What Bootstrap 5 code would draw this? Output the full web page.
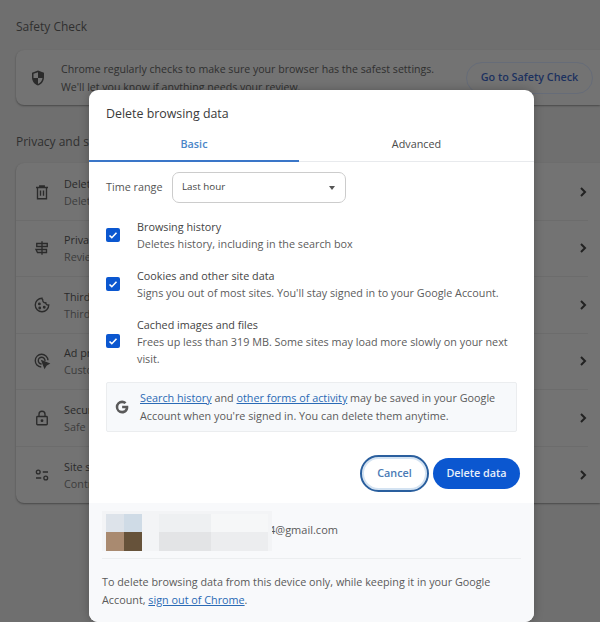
<!DOCTYPE html>
<html lang="en">
<head>
<meta charset="utf-8">
<title>Delete browsing data</title>
<link href="https://cdn.jsdelivr.net/npm/bootstrap@5.3.0/dist/css/bootstrap.min.css" rel="stylesheet">
<style>
html,body{height:622px;overflow:hidden}
body{background:#6f6f6f;font-family:"Open Sans","Noto Sans",sans-serif;font-size:10.8px;color:#3c3c3c;position:relative}
.bgpage{padding:19px 0 0 16px;color:#333}
.sec-title{font-size:12px;line-height:16px;color:#2f2f2f}
.bg-card{background:#737373;border-radius:8px 0 0 8px;box-shadow:0 1px 2px rgba(0,0,0,.35)}
.safety{height:55px;margin-top:15px;margin-bottom:29px;padding-left:13px;padding-right:7px}
.safety p{line-height:18px;color:#2f2f2f;font-size:10.6px;margin-left:14px}
.go-btn{border:1px solid #666c78;border-radius:16px;height:32px;width:127px;color:#1c315f;font-weight:600;font-size:10.8px}
.rows{margin-top:13px;height:340px;padding-right:12px;padding-top:1px}
.bg-row{height:56.5px;padding-left:17px;border-bottom:1px solid #6c6c6c;line-height:17px;color:#2a2a2a}
.bg-row:last-child{border-bottom:0}
.bg-row .txt{margin-left:13px}
.bg-row .sub{color:#3c3c3c}
.bg-ico{width:18px;height:18px;flex:none}
.dlg{position:absolute;left:89px;top:90px;width:445px;height:532px;background:#fff;border-radius:9px;overflow:hidden;box-shadow:0 0 10px rgba(0,0,0,.25)}
.dlg-head{padding:14px 17px 0;font-size:12.4px;line-height:19px;height:42px;color:#3a3a3a}
.tabbar{height:30px;border-bottom:1px solid #e8eaed;flex:none}
.tabitem{line-height:24px;text-align:center;color:#4a4a4a;font-size:10.8px}
.tabitem.on{width:210px;color:#4a86c8;font-weight:600;border-bottom:2px solid #3a76c8;height:30px}
.tabitem.off{flex:1;font-weight:500}
.range{padding:10px 17px 0;height:51px;flex:none}
.range-lbl{width:66px;font-size:10.8px;color:#555;line-height:30px}
.fake-select{width:174px;height:31px;border:1px solid #ccc;border-radius:7px;padding:0 10px 0 9px;font-size:9.8px;color:#444}
.caret{width:0;height:0;border-left:3px solid transparent;border-right:3px solid transparent;border-top:4px solid #555}
.opts{padding:0 17px;flex:none}
.opt{line-height:17px}
.opt .ck{width:14px;height:14px;background:#0b57d0;border-radius:2px;flex:none;margin-right:17px}
.opt .name{color:#444}
.opt .desc{color:#5c5c5c}
.opt1,.opt2{height:49px;padding-bottom:6px}
.opt3{height:71px;padding-bottom:11px}
.info{margin:0 17px;height:50px;flex:none;background:#f7f9fb;border:1px solid #ebedef;border-radius:2px;line-height:18px;color:#5a5a5a;padding-left:7px}
.info a,.foot a{color:#2a6ab5}
.gicon{width:16px;height:16px;margin-right:10px;flex:none}
.acts{height:71px;flex:none;padding-right:14px;padding-top:12px}
.btn-cancel{width:69px;height:37px;border:2px solid #2a5f9e;border-radius:19px;background:#fff;color:#4a7ab5;font-weight:600;font-size:10.8px;padding:0;box-shadow:inset 0 0 0 2px #d4e3f2}
.btn-del{width:87px;height:31px;border:0;border-radius:16px;background:#0b57d0;color:#e8effa;font-weight:600;font-size:10.8px;padding:0;margin-left:4px}
.foot{background:#f8f9fb;height:119px;padding:0 13px;flex:none}
.acct{height:56px;border-bottom:1px solid #eceef0;color:#5a5a5a}
.blurblk{width:170px;height:40px;background:#f3f4f6;flex:none;padding:3px 4px;display:grid;grid-template-columns:18px 18px 17px 1fr;grid-template-rows:18px 19px;position:relative;z-index:1}
.p1{background:#dde3ea}.p2{background:#cfdbe6}.p3{background:#a98a70}.p4{background:#66523a}
.p5{background:linear-gradient(90deg,#eef0f2 0,#eef0f2 48%,#f6f7f8 48%)}.p6{background:linear-gradient(90deg,#e3e4e6 0,#e3e4e6 48%,#ecedef 48%)}
.mailtxt{margin-left:-3px;font-size:11px}
.foot-text{padding-top:14px;line-height:18px;color:#5a5a5a}
</style>
</head>
<body>
<div class="bgpage">
  <div class="sec-title">Safety Check</div>
  <div class="bg-card safety d-flex align-items-center">
    <svg class="bg-ico" viewBox="0 0 24 24"><path fill="#2b2b2b" d="M12 2 4 5v6c0 5 3.400 9.600 8 11 4.600-1.400 8-6 8-11V5zm0 2.200v7.800H6V6.400zm0 7.800h6c-.5 3.700-2.900 6.900-6 7.900z"/></svg>
    <p class="mb-0 flex-grow-1">Chrome regularly checks to make sure your browser has the safest settings.<br>We'll let you know if anything needs your review.</p>
    <div class="go-btn d-flex align-items-center justify-content-center">Go to Safety Check</div>
  </div>
  <div class="sec-title">Privacy and security</div>
  <div class="bg-card rows">
    <div class="bg-row d-flex align-items-center">
      <svg class="bg-ico" viewBox="0 0 24 24" fill="none" stroke="#2b2b2b" stroke-width="1.800"><path d="M4 6h16M9 6V4h6v2M6 6v15h12V6M10 10v7M14 10v7"/></svg>
      <div class="txt flex-grow-1">Delete browsing data<br><span class="sub">Delete history, cookies</span></div>
      <svg width="10" height="12" viewBox="0 0 10 12" fill="none" stroke="#222" stroke-width="2"><path d="m3 2 4 4-4 4"/></svg>
    </div>
    <div class="bg-row d-flex align-items-center">
      <svg class="bg-ico" viewBox="0 0 24 24" fill="none" stroke="#2b2b2b" stroke-width="1.800"><path d="M12 3v18M5 6h14v4H5zM4 14h14v4H6z"/></svg>
      <div class="txt flex-grow-1">Privacy guide<br><span class="sub">Review your privacy</span></div>
      <svg width="10" height="12" viewBox="0 0 10 12" fill="none" stroke="#222" stroke-width="2"><path d="m3 2 4 4-4 4"/></svg>
    </div>
    <div class="bg-row d-flex align-items-center">
      <svg class="bg-ico" viewBox="0 0 24 24" fill="none" stroke="#2b2b2b" stroke-width="1.800"><path d="M12 3a9 9 0 1 0 9 9c-2.500.5-4-1-4-3-2.500.5-4.500-1.500-4-4-.7-.5-1-1.200-1-2z"/><circle cx="8.500" cy="10.500" r="1" fill="#2b2b2b"/><circle cx="9" cy="16" r="1" fill="#2b2b2b"/><circle cx="15" cy="15" r="1" fill="#2b2b2b"/></svg>
      <div class="txt flex-grow-1">Third-party cookies<br><span class="sub">Third-party cookies</span></div>
      <svg width="10" height="12" viewBox="0 0 10 12" fill="none" stroke="#222" stroke-width="2"><path d="m3 2 4 4-4 4"/></svg>
    </div>
    <div class="bg-row d-flex align-items-center">
      <svg class="bg-ico" viewBox="0 0 24 24" fill="none" stroke="#2b2b2b" stroke-width="1.800"><path d="M20 11a8.500 8.500 0 1 0-9 9"/><path d="M16 12a4.500 4.500 0 1 0-4.500 4"/><path fill="#2b2b2b" d="m12 12 9 3.500-3.500 2-2 3.500z"/></svg>
      <div class="txt flex-grow-1">Ad privacy<br><span class="sub">Customize the info</span></div>
      <svg width="10" height="12" viewBox="0 0 10 12" fill="none" stroke="#222" stroke-width="2"><path d="m3 2 4 4-4 4"/></svg>
    </div>
    <div class="bg-row d-flex align-items-center">
      <svg class="bg-ico" viewBox="0 0 24 24" fill="none" stroke="#2b2b2b" stroke-width="1.800"><rect x="5" y="10" width="14" height="11" rx="1"/><path d="M8 10V7a4 4 0 0 1 8 0v3"/><circle cx="12" cy="15.500" r="1" fill="#2b2b2b"/></svg>
      <div class="txt flex-grow-1">Security<br><span class="sub">Safe Browsing</span></div>
      <svg width="10" height="12" viewBox="0 0 10 12" fill="none" stroke="#222" stroke-width="2"><path d="m3 2 4 4-4 4"/></svg>
    </div>
    <div class="bg-row d-flex align-items-center">
      <svg class="bg-ico" viewBox="0 0 24 24" fill="none" stroke="#2b2b2b" stroke-width="1.800"><circle cx="7" cy="8" r="2.500"/><path d="M13 8h7M4 16h7"/><circle cx="17" cy="16" r="2.500"/></svg>
      <div class="txt flex-grow-1">Site settings<br><span class="sub">Controls what</span></div>
      <svg width="10" height="12" viewBox="0 0 10 12" fill="none" stroke="#222" stroke-width="2"><path d="m3 2 4 4-4 4"/></svg>
    </div>
  </div>
</div>

<div class="dlg d-flex flex-column">
  <div class="dlg-head">Delete browsing data</div>
  <div class="tabbar d-flex">
    <div class="tabitem on">Basic</div>
    <div class="tabitem off">Advanced</div>
  </div>
  <div class="range d-flex align-items-start">
    <div class="range-lbl">Time range</div>
    <div class="fake-select d-flex align-items-center justify-content-between">Last hour<span class="caret"></span></div>
  </div>
  <div class="opts">
    <div class="opt opt1 d-flex align-items-center"><span class="ck d-flex align-items-center justify-content-center"><svg width="10" height="10" viewBox="0 0 10 10" fill="none" stroke="#fff" stroke-width="1.600"><path d="m1.500 5.500 2.300 2.200 4.700-5"/></svg></span><div><div class="name">Browsing history</div><div class="desc">Deletes history, including in the search box</div></div></div>
    <div class="opt opt2 d-flex align-items-center"><span class="ck d-flex align-items-center justify-content-center"><svg width="10" height="10" viewBox="0 0 10 10" fill="none" stroke="#fff" stroke-width="1.600"><path d="m1.500 5.500 2.300 2.200 4.700-5"/></svg></span><div><div class="name">Cookies and other site data</div><div class="desc">Signs you out of most sites. You'll stay signed in to your Google Account.</div></div></div>
    <div class="opt opt3 d-flex align-items-center"><span class="ck d-flex align-items-center justify-content-center"><svg width="10" height="10" viewBox="0 0 10 10" fill="none" stroke="#fff" stroke-width="1.600"><path d="m1.500 5.500 2.300 2.200 4.700-5"/></svg></span><div><div class="name">Cached images and files</div><div class="desc">Frees up less than 319 MB. Some sites may load more slowly on your next visit.</div></div></div>
  </div>
  <div class="info d-flex align-items-center">
    <svg class="gicon" viewBox="0 0 24 24" fill="#5a5a5a"><path d="M12.200 10.300v3.700h5.300c-.7 2.500-2.700 3.800-5.300 3.800a5.800 5.800 0 0 1 0-11.600c1.500 0 2.800.5 3.800 1.400l2.700-2.700A9.600 9.600 0 0 0 12.200 2.400a9.600 9.600 0 0 0 0 19.200c5.500 0 9.300-3.900 9.300-9.400 0-.7-.1-1.300-.2-1.900z"/></svg>
    <div><a href="#">Search history</a> and <a href="#">other forms of activity</a> may be saved in your Google<br>Account when you're signed in. You can delete them anytime.</div>
  </div>
  <div class="acts d-flex justify-content-end align-items-center">
    <button class="btn-cancel" type="button">Cancel</button>
    <button class="btn-del" type="button">Delete data</button>
  </div>
  <div class="foot">
    <div class="acct d-flex align-items-center">
      <div class="blurblk"><span class="p1"></span><span class="p2"></span><span></span><span class="p5"></span><span class="p3"></span><span class="p4"></span><span></span><span class="p6"></span></div>
      <span class="mailtxt">4@gmail.com</span>
    </div>
    <div class="foot-text">To delete browsing data from this device only, while keeping it in your Google<br>Account, <a href="#">sign out of Chrome</a>.</div>
  </div>
</div>
<script src="https://cdn.jsdelivr.net/npm/bootstrap@5.3.0/dist/js/bootstrap.bundle.min.js"></script>
</body>
</html>
